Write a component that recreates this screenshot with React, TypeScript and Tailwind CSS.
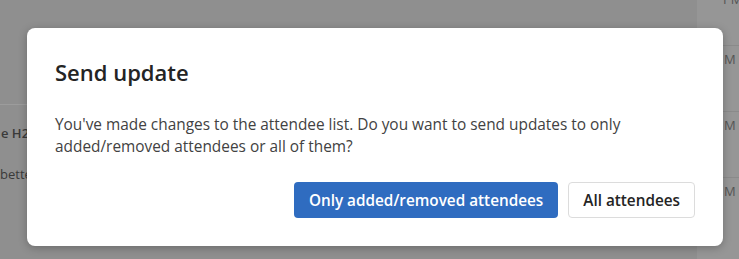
export default function App() {
  return (
    <div
      className="relative w-[739px] h-[259px] overflow-hidden bg-[#8f8f8f]"
      style={{ fontFamily: '"Open Sans", "Noto Sans", sans-serif' }}
    >
      {/* Underlying page, dimmed */}
      <div className="flex h-full">
        <div className="w-[27px] overflow-hidden pt-[104px] text-[13px] text-[#3a3a3a] whitespace-nowrap">
          <div className="border-t border-[#9c9c9c] h-[20px]" />
          <div className="pl-[1px] font-semibold">e H2</div>
          <div className="mt-[21px]">bette</div>
        </div>
        <div className="flex-1" />
        <div className="w-[42px] bg-[#969696] text-[13px] text-[#555] flex flex-col">
          <div className="h-[56px] border-b border-[#8a8a8a] -mt-[10px] pl-[26px]">PM</div>
          <div className="h-[66px] border-b border-[#8a8a8a] pl-[27px] pt-[4px]">M</div>
          <div className="h-[66px] border-b border-[#8a8a8a] pl-[27px] pt-[4px]">M</div>
          <div className="h-[66px] pl-[27px] pt-[4px]">M</div>
        </div>
      </div>

      {/* Dialog */}
      <div className="absolute left-[27px] top-[28px] w-[696px] h-[218px] bg-white rounded-[8px] shadow-[0_2px_8px_rgba(0,0,0,0.25)] px-[28px] pt-[29px]">
        <h2 className="text-[22px] font-semibold text-[#242424] leading-[30px]">Send update</h2>
        <p className="mt-[27px] text-[15.4px] leading-[22px] text-[#424242] w-[620px]">
          You've made changes to the attendee list. Do you want to send updates to only added/removed attendees or all of them?
        </p>
        <div className="flex justify-end gap-[10px] mt-[24px]">
          <button className="h-[36px] px-[15px] rounded-[4px] bg-[#2f6cc0] text-white text-[15.3px] font-semibold whitespace-nowrap">
            Only added/removed attendees
          </button>
          <button className="h-[36px] px-[14px] rounded-[4px] bg-white border border-[#dcdcdc] text-[#242424] text-[15.3px] font-semibold whitespace-nowrap">
            All attendees
          </button>
        </div>
      </div>
    </div>
  );
}
